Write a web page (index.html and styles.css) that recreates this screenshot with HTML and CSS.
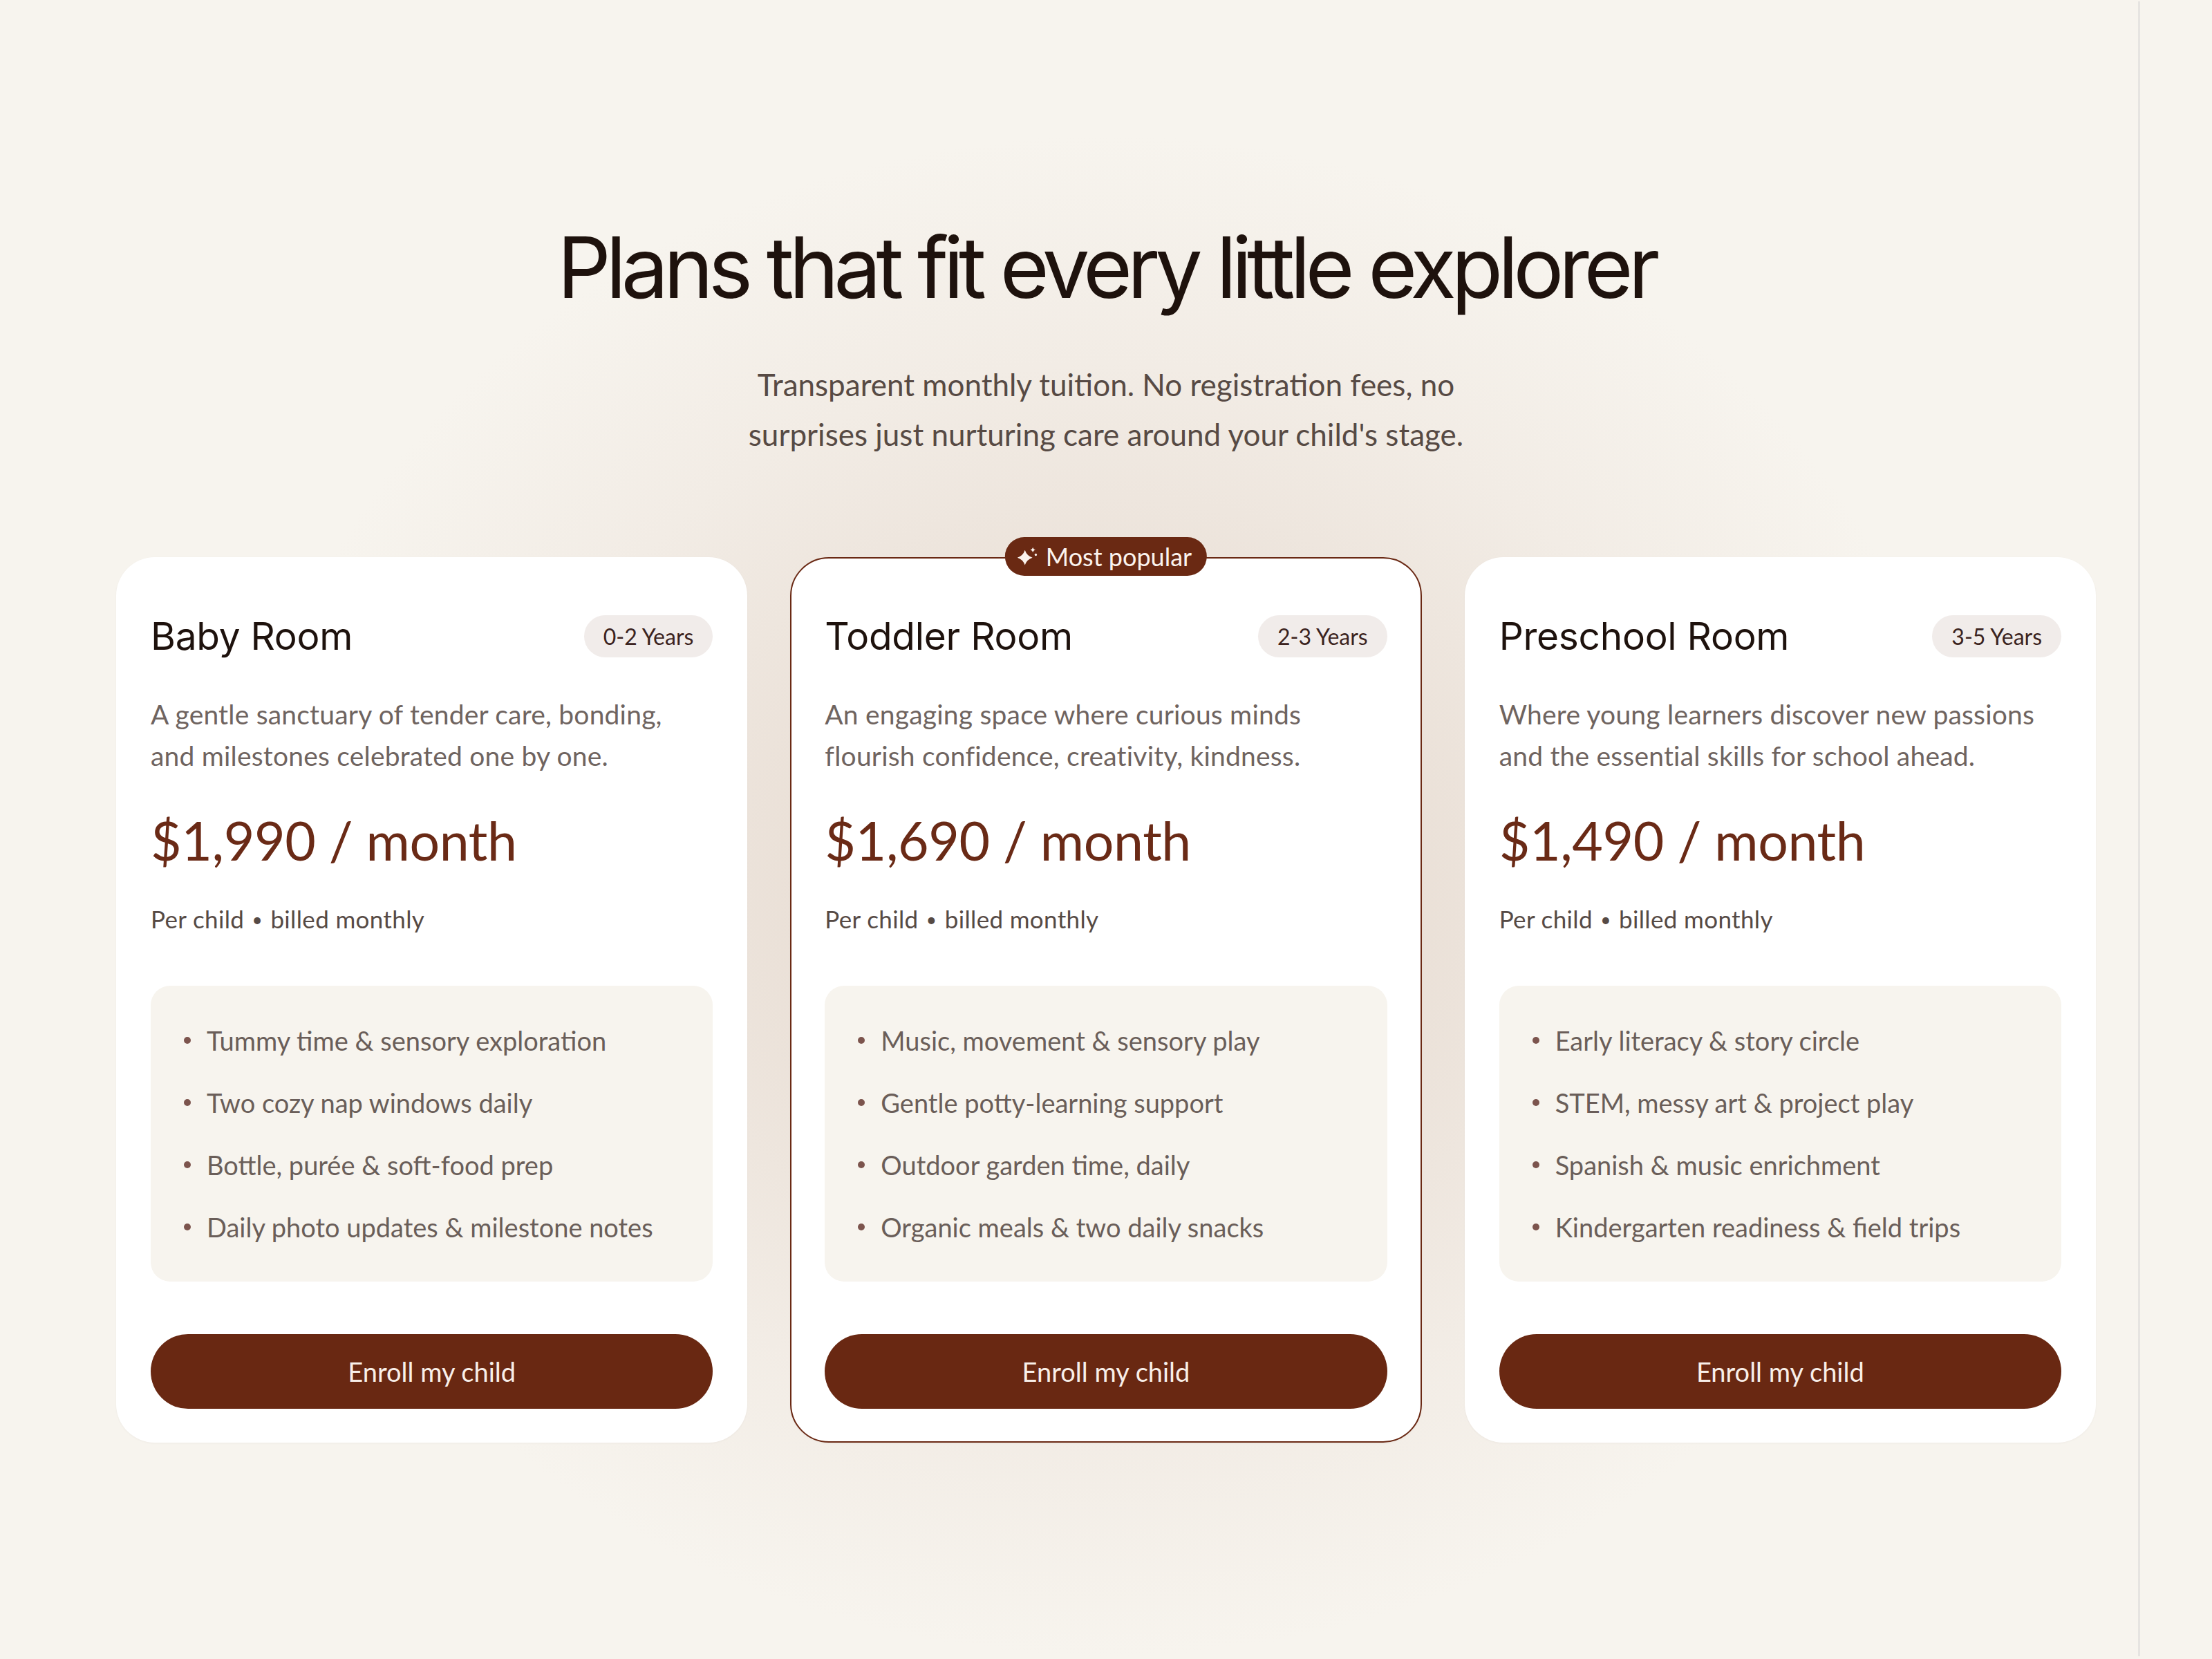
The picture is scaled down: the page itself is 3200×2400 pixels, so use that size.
FILE: index.html
```html
<!DOCTYPE html>
<html lang="en">
<head>
    <meta charset="UTF-8">
    <meta name="viewport" content="width=device-width, initial-scale=1.0">
    <title>Tuition Plans</title>
    <link rel="stylesheet" href="styles.css">
</head>
<body>
    <div class="frame-edge"></div>

    <section class="pricing">
        <h1>Plans that fit every little explorer</h1>
        <p class="lead">Transparent monthly tuition. No registration fees, no<br>surprises just nurturing care around your child's stage.</p>

        <div class="plans">
            <!-- Baby Room -->
            <div class="plan">
                <div class="plan-head">
                    <h2>Baby Room</h2>
                    <span class="age">0-2 Years</span>
                </div>
                <p class="desc">A gentle sanctuary of tender care, bonding,<br>and milestones celebrated one by one.</p>
                <div class="price">$1,990 / month</div>
                <div class="billing">Per child <span class="dot">&bull;</span> billed monthly</div>
                <ul class="features">
                    <li>Tummy time &amp; sensory exploration</li>
                    <li>Two cozy nap windows daily</li>
                    <li>Bottle, purée &amp; soft-food prep</li>
                    <li>Daily photo updates &amp; milestone notes</li>
                </ul>
                <button class="enroll">Enroll my child</button>
            </div>

            <!-- Toddler Room -->
            <div class="plan popular">
                <span class="popular-tag">
                    <svg class="sparkle" viewBox="0 0 24 24" fill="currentColor">
                        <path d="M9 4Q11.2 10.8 18 13Q11.2 15.2 9 22Q6.8 15.2 0 13Q6.8 10.8 9 4Z"/>
                        <path d="M18.5 0.5Q19 3.2 21.7 3.7Q19 4.2 18.5 6.9Q18 4.2 15.3 3.7Q18 3.2 18.5 0.5Z"/>
                        <circle cx="22" cy="9.5" r="1.4"/>
                    </svg>
                    Most popular
                </span>
                <div class="plan-head">
                    <h2>Toddler Room</h2>
                    <span class="age">2-3 Years</span>
                </div>
                <p class="desc">An engaging space where curious minds<br>flourish confidence, creativity, kindness.</p>
                <div class="price">$1,690 / month</div>
                <div class="billing">Per child <span class="dot">&bull;</span> billed monthly</div>
                <ul class="features">
                    <li>Music, movement &amp; sensory play</li>
                    <li>Gentle potty-learning support</li>
                    <li>Outdoor garden time, daily</li>
                    <li>Organic meals &amp; two daily snacks</li>
                </ul>
                <button class="enroll">Enroll my child</button>
            </div>

            <!-- Preschool Room -->
            <div class="plan">
                <div class="plan-head">
                    <h2>Preschool Room</h2>
                    <span class="age">3-5 Years</span>
                </div>
                <p class="desc">Where young learners discover new passions<br>and the essential skills for school ahead.</p>
                <div class="price">$1,490 / month</div>
                <div class="billing">Per child <span class="dot">&bull;</span> billed monthly</div>
                <ul class="features">
                    <li>Early literacy &amp; story circle</li>
                    <li>STEM, messy art &amp; project play</li>
                    <li>Spanish &amp; music enrichment</li>
                    <li>Kindergarten readiness &amp; field trips</li>
                </ul>
                <button class="enroll">Enroll my child</button>
            </div>
        </div>
    </section>
</body>
</html>
```

FILE: styles.css
```css
html, body {
    margin: 0;
    min-height: 2400px;
}
body {
    font-family: Lato, "Noto Sans", sans-serif;
    color: #564a45;
    background-color: #f7f4ee;
    background-image: radial-gradient(ellipse 1250px 1100px at 50% 54%, #e6dacf 0%, #eae0d7 35%, #f2ece5 70%, #f7f4ee 100%);
    position: relative;
}
.frame-edge {
    position: absolute;
    top: 2px;
    bottom: 4px;
    left: 3093px;
    width: 3px;
    background: #e6e4e1;
}
.pricing {
    padding-top: 320px;
    text-align: center;
}
h1 {
    font-family: Inter, "Liberation Sans", sans-serif;
    font-weight: 400;
    font-size: 122px;
    line-height: 134px;
    letter-spacing: -0.06em;
    color: #1e120d;
    margin: 0;
}
.lead {
    font-size: 44px;
    line-height: 72px;
    color: #574a44;
    margin: 66px 0 0;
}
.plans {
    display: grid;
    grid-template-columns: repeat(3, 1fr);
    gap: 62px;
    max-width: 2864px;
    margin: 142px auto 0;
    text-align: left;
}
.plan {
    position: relative;
    background: #fff;
    border: 2px solid transparent;
    border-radius: 56px;
    padding: 80px 48px 47px;
    box-shadow: 0 1px 3px rgba(60, 30, 10, 0.04);
}
.plan.popular {
    border-color: #6a2914;
}
.popular-tag {
    position: absolute;
    top: -31px;
    left: 50%;
    transform: translateX(-50%);
    display: flex;
    align-items: center;
    gap: 12px;
    height: 56px;
    padding: 0 22px 0 18px;
    border-radius: 28px;
    background: #6a2913;
    color: #fbf3ee;
    font-size: 36px;
    white-space: nowrap;
}
.sparkle {
    width: 29px;
    height: 29px;
    flex-shrink: 0;
}
.plan-head {
    display: flex;
    justify-content: space-between;
    align-items: center;
}
.plan-head h2 {
    font-family: Inter, "Liberation Sans", sans-serif;
    font-weight: 400;
    font-size: 55px;
    line-height: 65px;
    letter-spacing: -0.005em;
    color: #1e120d;
    margin: 0;
}
.age {
    display: flex;
    align-items: center;
    height: 61px;
    padding: 0 28px;
    border-radius: 31px;
    background: #f1ecea;
    color: #3b2320;
    font-size: 32px;
}
.desc {
    font-size: 39px;
    line-height: 60px;
    letter-spacing: 0.005em;
    color: #6f6460;
    margin: 50px 0 0;
    white-space: nowrap;
}
.price {
    font-size: 77px;
    line-height: 91px;
    letter-spacing: -0.005em;
    color: #6a2a16;
    margin-top: 47px;
}
.billing {
    font-size: 35px;
    line-height: 51px;
    letter-spacing: 0.01em;
    color: #564a45;
    margin-top: 43px;
}
.billing .dot {
    font-size: 0.75em;
    vertical-align: 0.1em;
    margin: 0 2px;
}
.features {
    list-style: none;
    margin: 70px 0 0;
    padding: 49px 48px;
    background: #f7f4ee;
    border-radius: 28px;
    display: flex;
    flex-direction: column;
    gap: 30px;
}
.features li {
    display: flex;
    align-items: center;
    gap: 23px;
    font-size: 38px;
    line-height: 60px;
    color: #6a5e59;
}
.features li::before {
    content: "";
    width: 10px;
    height: 10px;
    border-radius: 50%;
    background: #7c544d;
    flex-shrink: 0;
}
.enroll {
    display: block;
    width: 100%;
    height: 108px;
    margin-top: 76px;
    border: none;
    border-radius: 54px;
    background: #692812;
    color: #f8efe9;
    font-family: Lato, "Noto Sans", sans-serif;
    font-size: 38px;
    cursor: pointer;
}
```
